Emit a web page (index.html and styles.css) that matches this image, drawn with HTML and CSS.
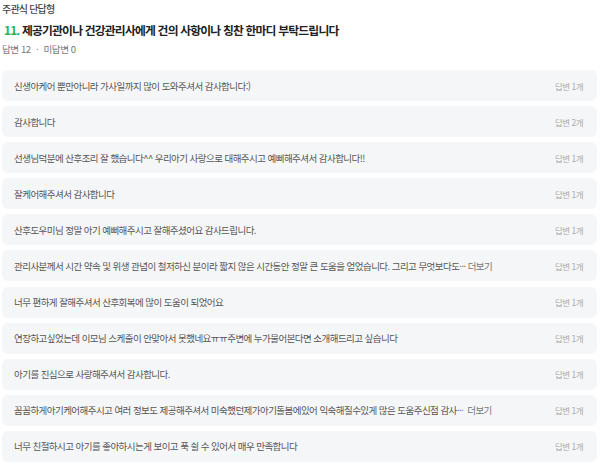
FILE: index.html
```html
<!DOCTYPE html>
<html lang="ko">
<head>
    <meta charset="UTF-8" />
    <title>주관식 단답형</title>
    <link rel="stylesheet" href="styles.css">
</head>
<body>
<div class="survey">
    <div class="q-type">주관식 단답형</div>
    <h2 class="q-title"><span class="q-num">11.</span> 제공기관이나 건강관리사에게 건의 사항이나 칭찬 한마디 부탁드립니다</h2>
    <div class="q-meta">답변 12 <span class="dot">·</span> 미답변 0</div>

    <ul class="answers">
        <li><span class="text">신생아케어 뿐만아니라 가사일까지 많이 도와주셔서 감사합니다:)</span><span class="count">답변 1개</span></li>
        <li><span class="text">감사합니다</span><span class="count">답변 2개</span></li>
        <li><span class="text">선생님덕분에 산후조리 잘 했습니다^^ 우리아기 사랑으로 대해주시고 예뻐해주셔서 감사합니다!!</span><span class="count">답변 1개</span></li>
        <li><span class="text">잘케어해주셔서 감사합니다</span><span class="count">답변 1개</span></li>
        <li><span class="text">산후도우미님 정말 아기 예뻐해주시고 잘해주셨어요 감사드립니다.</span><span class="count">답변 1개</span></li>
        <li><span class="text">관리사분께서 시간 약속 및 위생 관념이 철저하신 분이라 짧지 않은 시간동안 정말 큰 도움을 얻었습니다. 그리고 무엇보다도···<span class="more">더보기</span></span><span class="count">답변 1개</span></li>
        <li><span class="text">너무 편하게 잘해주셔서 산후회복에 많이 도움이 되었어요</span><span class="count">답변 1개</span></li>
        <li><span class="text">연장하고싶었는데 이모님 스케줄이 안맞아서 못했네요ㅠㅠ주변에 누가물어본다면 소개해드리고 싶습니다</span><span class="count">답변 1개</span></li>
        <li><span class="text">아기를 진심으로 사랑해주셔서 감사합니다.</span><span class="count">답변 1개</span></li>
        <li><span class="text">꼼꼼하게아기케어해주시고 여러 정보도 제공해주셔서 미숙했던제가아기돌봄에있어 익숙해질수있게 많은 도움주신점 감사··· <span class="more">더보기</span></span><span class="count">답변 1개</span></li>
        <li><span class="text">너무 친절하시고 아기를 좋아하시는게 보이고 푹 쉴 수 있어서 매우 만족합니다</span><span class="count">답변 1개</span></li>
    </ul>
</div>
</body>
</html>
```

FILE: styles.css
```css
body {
    margin: 0;
    padding: 0;
    background: #fff;
    font-family: "Noto Sans CJK KR", "Noto Sans", sans-serif;
    color: #333;
}
.survey {
    padding: 2px 3px 0 2px;
}
.q-type {
    font-size: 10px;
    line-height: 14px;
    letter-spacing: -0.8px;
    color: #444;
    font-weight: 500;
}
.q-title {
    margin: 6px 0 0 2px;
    font-size: 11.8px;
    line-height: 16px;
    letter-spacing: -0.8px;
    font-weight: 700;
    color: #222;
}
.q-num {
    color: #2bb24c;
}
.q-meta {
    margin-top: 5px;
    font-size: 9.5px;
    line-height: 13px;
    letter-spacing: -0.4px;
    color: #777;
}
.q-meta .dot {
    margin: 0 3px;
}
.answers {
    list-style: none;
    margin: 14px 0 0 0;
    padding: 0;
    display: flex;
    flex-direction: column;
    gap: 5.1px;
}
.answers li {
    display: flex;
    align-items: center;
    justify-content: space-between;
    height: 31px;
    padding: 0 14px 0 12px;
    background: #f5f6f8;
    border-radius: 6px;
}
.text {
    font-size: 9.5px;
    letter-spacing: -0.55px;
    color: #555;
    white-space: nowrap;
}
.more {
    color: #777;
    margin-left: 2px;
}
.count {
    font-size: 8.5px;
    letter-spacing: -0.5px;
    color: #aaa;
    white-space: nowrap;
}
```
